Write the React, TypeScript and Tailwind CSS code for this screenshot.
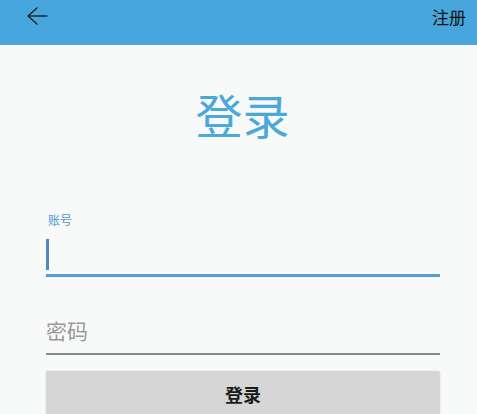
import React from "react";

export default function App() {
  return (
    <div
      className="w-[477px] h-[414px] overflow-hidden bg-[#f8f9f9] flex flex-col"
      style={{ fontFamily: '"Noto Sans CJK SC", "Noto Sans", sans-serif' }}
    >
      <div className="h-[45px] bg-[#47a6db] flex items-center justify-between pl-[26px] pr-[11px] shrink-0">
        <svg width="22" height="20" viewBox="0 0 22 20" fill="none" className="-mt-[13px]">
          <path d="M11 2 L2 10 L11 18 M2 10 H21" stroke="#1f2a30" strokeWidth="1.6" strokeLinecap="round" strokeLinejoin="round" />
        </svg>
        <span className="text-[17px] leading-none text-[#111] -mt-[13px]">注册</span>
      </div>
      <div className="flex flex-col px-[46px] pr-[37px]">
        <div className="text-[47px] leading-none text-[#4ba8da] text-center mt-[45px] mr-[1px]">登录</div>
        <div className="mt-[77px] text-[12px] leading-none text-[#4f97d6] pl-[2px]">账号</div>
        <div className="mt-[12px] h-[32px] flex items-center">
          <div className="w-[3px] h-[31px] bg-[#4f88c2]" />
        </div>
        <div className="mt-[4px] h-[3px] bg-[#5b9bd5]" />
        <div className="mt-[43px] text-[21px] leading-none text-[#9a9a9a]">密码</div>
        <div className="mt-[12px] h-[2px] bg-[#8a8a8a]" />
        <div className="mt-[16px] h-[50px] bg-[#d6d6d6] rounded-[2px] shadow-[0_0_2px_rgba(0,0,0,0.15)] flex justify-center pt-[14px]">
          <span className="text-[18px] leading-none font-bold text-[#1a1a1a]">登录</span>
        </div>
      </div>
    </div>
  );
}
